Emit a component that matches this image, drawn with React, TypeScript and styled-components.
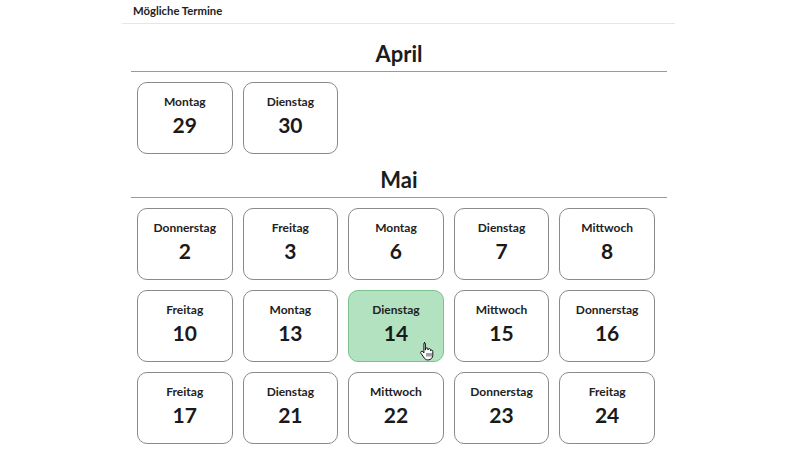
import styled, { createGlobalStyle } from 'styled-components';

const GlobalStyle = createGlobalStyle`
  html, body {
    margin: 0;
    padding: 0;
    background: #ffffff;
    font-family: Lato, "Liberation Sans", sans-serif;
    color: #1c1c1c;
  }
`;

type Day = { name: string; num: number; active?: boolean };

const months: { title: string; days: Day[] }[] = [
  {
    title: 'April',
    days: [
      { name: 'Montag', num: 29 },
      { name: 'Dienstag', num: 30 }
    ]
  },
  {
    title: 'Mai',
    days: [
      { name: 'Donnerstag', num: 2 },
      { name: 'Freitag', num: 3 },
      { name: 'Montag', num: 6 },
      { name: 'Dienstag', num: 7 },
      { name: 'Mittwoch', num: 8 },
      { name: 'Freitag', num: 10 },
      { name: 'Montag', num: 13 },
      { name: 'Dienstag', num: 14, active: true },
      { name: 'Mittwoch', num: 15 },
      { name: 'Donnerstag', num: 16 },
      { name: 'Freitag', num: 17 },
      { name: 'Dienstag', num: 21 },
      { name: 'Mittwoch', num: 22 },
      { name: 'Donnerstag', num: 23 },
      { name: 'Freitag', num: 24 }
    ]
  }
];

function HandCursor() {
  return (
    <Cursor width="16" height="20" viewBox="0 0 16 20">
      <path
        d="M5 1.5c.8 0 1.4.6 1.4 1.4v6.2l.2-1.3c.1-.7.7-1.1 1.4-1 .6.1 1 .6 1 1.2v1l.2-.6c.2-.6.8-.9 1.4-.8.6.2.9.7.9 1.3v.9c.2-.5.7-.8 1.3-.7.6.1 1 .6 1 1.2v3.8c0 2.6-1.9 4.8-4.6 4.8H8.6c-1.3 0-2.4-.6-3.1-1.6L1.9 12.2c-.4-.6-.3-1.3.3-1.7.5-.4 1.3-.3 1.7.2l1 1.2V2.9c0-.8.3-1.4 1.1-1.4z"
        fill="#ffffff"
        stroke="#111111"
        strokeWidth="1"
        strokeLinejoin="round"
      />
      <path d="M8 12v3.5M10 12v3.5M12 12v3.5" stroke="#111111" strokeWidth="0.8" />
    </Cursor>
  );
}

export default function App() {
  return (
    <>
      <GlobalStyle />
      <Page>
        <Header>Mögliche Termine</Header>
        <Body>
          {months.map((m) => (
            <section key={m.title}>
              <MonthTitle>{m.title}</MonthTitle>
              <DayGrid>
                {m.days.map((d) => (
                  <DayCard key={m.title + d.num} $active={d.active}>
                    <DayName>{d.name}</DayName>
                    <DayNum>{d.num}</DayNum>
                    {d.active && <HandCursor />}
                  </DayCard>
                ))}
              </DayGrid>
            </section>
          ))}
        </Body>
      </Page>
    </>
  );
}

const Page = styled.div`
  width: 553px;
  margin: 0 125px 0 122px;
`;

const Header = styled.div`
  height: 23px;
  padding-left: 11px;
  border-bottom: 1px solid #e6e6e6;
  font-size: 11.3px;
  font-weight: 700;
  line-height: 22px;
  color: #222;
`;

const Body = styled.div`
  padding: 16px 8px 0 9px;
`;

const MonthTitle = styled.h2`
  margin: 0;
  height: 27px;
  padding-bottom: 4px;
  border-bottom: 1px solid #9a9a9a;
  text-align: center;
  font-size: 22px;
  font-weight: 700;
  line-height: 28px;
  color: #1c1c1c;
`;

const DayGrid = styled.div`
  display: grid;
  grid-template-columns: repeat(5, 95.5px);
  column-gap: 10.1px;
  row-gap: 10px;
  padding: 10px 0 12px 6px;
`;

const DayCard = styled.div<{ $active?: boolean }>`
  position: relative;
  height: 72px;
  box-sizing: border-box;
  border: 1px solid ${(p) => (p.$active ? '#7cc28f' : '#8a8a8a')};
  border-radius: 10px;
  background: ${(p) => (p.$active ? '#b3e2c0' : '#ffffff')};
  display: flex;
  flex-direction: column;
  align-items: center;
  padding-top: 11px;
`;

const DayName = styled.div`
  font-size: 12px;
  font-weight: 700;
  line-height: 16px;
  color: #222;
`;

const DayNum = styled.div`
  font-size: 21px;
  font-weight: 700;
  line-height: 26px;
  margin-top: 2px;
  color: #1a1a1a;
`;

const Cursor = styled.svg`
  position: absolute;
  left: 70px;
  top: 50px;
`;
